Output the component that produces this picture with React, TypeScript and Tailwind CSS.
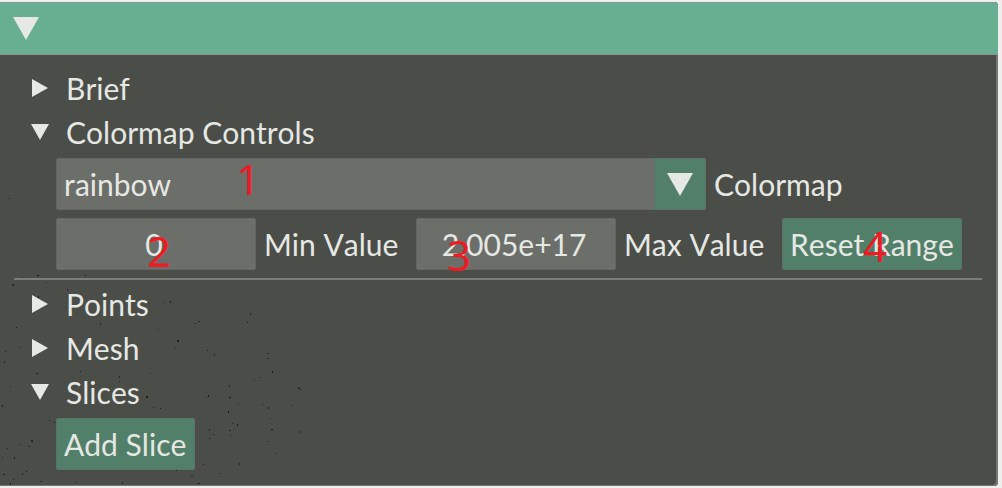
import type { ReactNode } from "react";

function Down({ large = false }: { large?: boolean }) {
  return large ? (
    <svg className="h-[23px] w-[26px]" viewBox="0 0 26 23" aria-hidden="true">
      <path d="M0 0H26L13 23Z" fill="#e6e8e4" />
    </svg>
  ) : (
    <svg className="h-4 w-[18px]" viewBox="0 0 18 16" aria-hidden="true">
      <path d="M0 0H18L9 16Z" fill="#e6e8e4" />
    </svg>
  );
}

function TreeNode({ open = false, children }: { open?: boolean; children: ReactNode }) {
  return (
    <button type="button" aria-expanded={open} className="flex h-9 w-full items-center gap-[17px] pl-[15px] text-left">
      <span className="flex w-[18px] justify-center">
        {open ? (
          <Down />
        ) : (
          <svg className="h-[18px] w-4" viewBox="0 0 16 18" aria-hidden="true">
            <path d="M0 0V18L16 9Z" fill="#e6e8e4" />
          </svg>
        )}
      </span>
      <span>{children}</span>
    </button>
  );
}

function Marker({ className, children }: { className: string; children: ReactNode }) {
  return (
    <span className={`pointer-events-none absolute font-['Noto_Sans',sans-serif] text-[42px] leading-[42px] text-[#ed1c24] ${className}`}>
      {children}
    </span>
  );
}

const specks = [
  [12, 284], [9, 198], [22, 277], [38, 296], [46, 282], [37, 275], [67, 289], [85, 275],
  [163, 302], [170, 301], [198, 321], [195, 323], [250, 313], [247, 322], [158, 329], [177, 340],
  [175, 348], [207, 350], [214, 354], [267, 353], [267, 358], [272, 371], [254, 380], [260, 377],
  [229, 385], [229, 397], [206, 397], [208, 395], [238, 404], [262, 404], [298, 387], [300, 389],
  [292, 405], [228, 411], [270, 418], [271, 429], [299, 431], [267, 441], [232, 423], [237, 424],
  [229, 430], [230, 435], [209, 429], [209, 438], [213, 434], [191, 434], [189, 446], [203, 464],
  [239, 463], [220, 473], [191, 476], [176, 469], [5, 351], [20, 347], [4, 361], [36, 373],
  [10, 386], [2, 405], [49, 420], [54, 422], [31, 440], [20, 444], [7, 448], [14, 457],
  [2, 457], [3, 474], [22, 473], [26, 471], [13, 479], [10, 483], [40, 481], [80, 371],
  [119, 376], [119, 381], [150, 373], [146, 396], [153, 407], [160, 408], [100, 323], [16, 327],
  [28, 446], [61, 427], [72, 461], [75, 482], [122, 482], [198, 483], [276, 453], [268, 407],
];

export default function App() {
  return (
    <div className="bg-[#eeeeec] pt-0.5 pr-1 pb-0.5 font-['Lato',sans-serif] text-[30px] leading-9 text-[#e6e8e4] [font-kerning:none]">
      <main className="relative overflow-hidden rounded-r-sm bg-[#4b4d49] shadow-[inset_-2px_-1px_0_#747672]">
        <svg className="pointer-events-none absolute inset-0 h-full w-full" aria-hidden="true">
          {specks.map(([x, y], i) => (
            <rect key={i} x={x} y={y - 2} width={i % 5 === 0 ? 2 : 1} height={i % 3 === 0 ? 2 : 1} fill={i % 2 ? "#20182d" : "#282a2a"} />
          ))}
        </svg>
        <header className="relative flex h-[53px] items-center border-y border-[#80998c] bg-[#67af90] pl-[13px]">
          <button type="button" aria-label="Collapse panel">
            <Down large />
          </button>
        </header>
        <div className="relative flex flex-col gap-2 px-4 pt-[15px] pb-4">
          <TreeNode>Brief</TreeNode>
          <TreeNode open>Colormap Controls</TreeNode>
          <div className="flex items-center gap-2 pl-10">
            <div className="relative h-[52px] w-[650px]">
              <select id="colormap" defaultValue="rainbow" className="block h-full w-full appearance-none rounded-xs border border-[#646662] bg-[#6c6e6a] px-[7px] leading-9 outline-none">
                <option>rainbow</option>
              </select>
              <span className="pointer-events-none absolute inset-y-0 right-0 flex w-[52px] items-center justify-center rounded-r-xs border border-[#5c7569] bg-[#527f6a]">
                <Down large />
              </span>
              <Marker className="top-0 left-[180px]">1</Marker>
            </div>
            <label htmlFor="colormap">Colormap</label>
          </div>
          <div className="flex items-center gap-2 pl-10">
            <div className="relative">
              <input id="min" defaultValue="0" className="block h-[52px] w-[200px] rounded-xs border border-[#646662] bg-[#6c6e6a] pr-1 text-center outline-none" />
              <Marker className="top-3 left-[91px]">2</Marker>
            </div>
            <label htmlFor="min" className="w-36 whitespace-nowrap">Min Value</label>
            <div className="relative">
              <input id="max" defaultValue="2.005e+17" className="block h-[52px] w-[200px] rounded-xs border border-[#646662] bg-[#6c6e6a] pr-1 text-center outline-none" />
              <Marker className="top-4 left-[31px]">3</Marker>
            </div>
            <label htmlFor="max" className="w-[150px] whitespace-nowrap">Max Value</label>
            <button type="button" className="relative h-[52px] rounded-xs border border-[#5c7569] bg-[#527f6a] px-[7px] whitespace-nowrap">
              Reset Range
              <Marker className="top-1.5 left-20">4</Marker>
            </button>
          </div>
          <hr className="-ml-0.5 -mb-0.5 border-t-2 border-[#7b7d79]" />
          <TreeNode>Points</TreeNode>
          <TreeNode>Mesh</TreeNode>
          <TreeNode open>Slices</TreeNode>
          <div className="pl-10">
            <button type="button" className="block h-[52px] rounded-xs border border-[#5c7569] bg-[#527f6a] pr-2 pl-[7px]">Add Slice</button>
          </div>
        </div>
      </main>
    </div>
  );
}
